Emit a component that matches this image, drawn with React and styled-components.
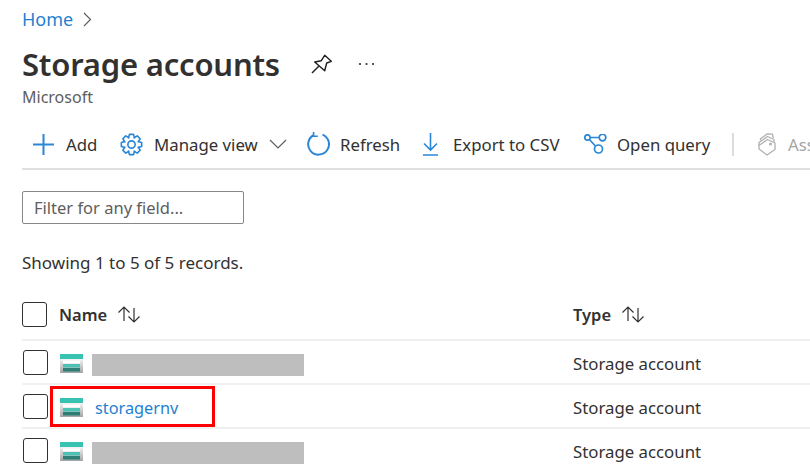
import React from "react";
import styled, { createGlobalStyle } from "styled-components";

const GlobalStyle = createGlobalStyle`
	html, body {
		margin: 0;
		padding: 0;
		background: #fff;
		overflow: hidden;
	}
	body {
		font-family: "Noto Sans", "Open Sans", sans-serif;
		color: #323130;
	}
	svg {
		flex: none;
	}
`;

const Page = styled.div`
	width: 810px;
	height: 471px;
	overflow: hidden;
	padding: 8px 0 0 22px;
	box-sizing: border-box;
`;

const Breadcrumb = styled.div`
	display: flex;
	align-items: center;
	gap: 10px;
	height: 22px;
	font-size: 18px;
	color: #1f7fd1;
`;

const TitleRow = styled.div`
	display: flex;
	align-items: center;
	margin-top: 11px;
	height: 46px;
`;

const Title = styled.h1`
	margin: 0;
	font-size: 31px;
	line-height: 46px;
	font-weight: 600;
	letter-spacing: -0.2px;
	color: #323130;
	white-space: nowrap;
	width: 256px;
`;

const PinButton = styled.span`
	display: flex;
	margin-left: 33px;
`;

const MoreDots = styled.span`
	display: flex;
	margin-left: 26px;
`;

const Subtitle = styled.div`
	font-size: 16px;
	line-height: 20px;
	color: #605e5c;
`;

const Toolbar = styled.div`
	display: flex;
	align-items: center;
	height: 48px;
	margin-top: 15px;
	padding: 0 0 2px 11px;
	border-bottom: 2px solid #e1dfdd;
	box-sizing: border-box;
	white-space: nowrap;
`;

const ToolButton = styled.div`
	display: flex;
	align-items: center;
	flex: none;
	width: ${(p) => p.$width}px;
	gap: ${(p) => p.$gap || 12}px;
	font-size: 16.8px;
	color: ${(p) => (p.$disabled ? "#a6a6a6" : "#323130")};
`;

const Divider = styled.span`
	flex: none;
	width: 2px;
	height: 23px;
	background: #dcdcdc;
	margin-right: 24px;
`;

const FilterInput = styled.div`
	width: 222px;
	height: 33px;
	margin-top: 21px;
	border: 1px solid #8a8886;
	border-radius: 2px;
	box-sizing: border-box;
	padding-left: 11px;
	font-size: 16.5px;
	line-height: 31px;
	color: #605e5c;
`;

const Records = styled.div`
	font-size: 17px;
	line-height: 22px;
	margin-top: 28px;
	color: #323130;
`;

const Table = styled.div`
	position: relative;
	margin-top: 17px;
`;

const Row = styled.div`
	display: grid;
	grid-template-columns: 37px 514px 1fr;
	align-items: center;
	height: ${(p) => (p.$head ? 50 : 44)}px;
	padding-bottom: ${(p) => (p.$head ? 2 : 0)}px;
	border-bottom: 2px solid #f0f0f0;
	box-sizing: border-box;
	font-size: 16.8px;
`;

const Check = styled.span`
	display: block;
	width: 25px;
	height: 25px;
	margin-left: ${(p) => (p.$head ? 0 : 1)}px;
	border: 1px solid #323130;
	border-radius: 3px;
	box-sizing: border-box;
	background: #fff;
`;

const HeadCell = styled.div`
	display: flex;
	align-items: center;
	gap: 10px;
	font-size: 16.5px;
	font-weight: 600;
	color: #323130;
`;

const NameCell = styled.div`
	display: flex;
	align-items: center;
	gap: ${(p) => (p.$link ? 12 : 9)}px;
	padding-left: 1px;
`;

const TypeCell = styled.div`
	padding-top: 3px;
`;

const Redacted = styled.span`
	display: block;
	width: 212px;
	height: 22px;
	margin-top: 6px;
	background: #bebebe;
`;

const NameLink = styled.a`
	color: #1f7fd1;
	font-size: 16.3px;
	padding-top: 3px;
`;

const StorageSvg = styled.svg`
	margin-top: 3px;
`;

const Highlight = styled.div`
	position: absolute;
	left: 28px;
	top: 95px;
	width: 165px;
	height: 41px;
	border: 3px solid #ff0000;
	box-sizing: border-box;
`;

const blue = "#2a86d6";

// 8 tooth cog outline around the centre of a 24 box
function cogPath() {
	const points = [];
	for (let i = 0; i < 8; i++) {
		const a = (i * Math.PI) / 4;
		[
			[-0.42, 7.6],
			[-0.2, 10.8],
			[0.2, 10.8],
			[0.42, 7.6],
		].forEach(([da, r]) => {
			points.push(
				`${(12 + r * Math.cos(a + da)).toFixed(2)} ${(12 + r * Math.sin(a + da)).toFixed(2)}`
			);
		});
	}
	return `M${points.join("L")}z`;
}

const PlusIcon = () => (
	<svg width="21" height="21" viewBox="0 0 21 21" fill="none" stroke={blue} strokeWidth="2">
		<path d="M10.5 0v21M0 10.5h21" />
	</svg>
);

const GearIcon = () => (
	<svg width="23" height="23" viewBox="0 0 24 24" fill="none" stroke={blue} strokeWidth="1.7" strokeLinejoin="round">
		<path d={cogPath()} />
		<circle cx="12" cy="12" r="3.8" />
	</svg>
);

const ChevronDown = () => (
	<svg width="18" height="10" viewBox="0 0 18 10" fill="none" stroke="#605e5c" strokeWidth="1.2">
		<path d="M1 1l8 8 8-8" />
	</svg>
);

const ChevronRight = () => (
	<svg width="9" height="15" viewBox="0 0 9 15" fill="none" stroke="#605e5c" strokeWidth="1.2">
		<path d="M1 1l6.5 6.5L1 14" />
	</svg>
);

const RefreshIcon = () => (
	<svg width="24" height="24" viewBox="0 0 24 24" fill="none" stroke={blue} strokeWidth="2">
		<path d="M15.5 2.6A10.4 10.4 0 1 1 6.8 3" />
		<path d="M6.6 0v4.2h4.2" strokeWidth="1.6" />
	</svg>
);

const DownloadIcon = () => (
	<svg width="15" height="23" viewBox="0 0 15 23" fill="none" stroke={blue} strokeWidth="1.6">
		<path d="M7.5 0v17M1 10.5l6.5 6.5 6.5-6.5M0 22h15" />
	</svg>
);

const QueryIcon = () => (
	<svg width="23" height="20" viewBox="0 0 23 20" fill="none" stroke={blue} strokeWidth="1.7">
		<circle cx="3.5" cy="3.5" r="2.7" />
		<circle cx="18.5" cy="3.5" r="3.3" />
		<circle cx="14.5" cy="15" r="4" />
		<path d="M6.2 3.5h9M5.4 5.5l6 6.5" />
	</svg>
);

const TagsIcon = () => (
	<svg width="18" height="23" viewBox="0 0 18 23" fill="none" stroke="#b0b0b0" strokeWidth="1.3" strokeLinejoin="round">
		<path d="M1 12.5L9.5 6.5 17 10v6.5L9 22 1 16z" />
		<circle cx="12.5" cy="11" r="0.9" />
		<path d="M1 12.5V9.5L9.5 3.5l6.5 3v2.5" />
		<path d="M2.5 7.5V5.8L9 1l5.5.2.8 4" />
	</svg>
);

const PinIcon = () => (
	<svg width="21" height="20" viewBox="0 0 21 20" fill="none" stroke="#201f1e" strokeWidth="1.4" strokeLinejoin="round">
		<path d="M13.7 1.3l6.6 6-4.6 1.7-2 7.7-10-8.7 6.6-1.3z" />
		<path d="M8 12l-7 7" />
	</svg>
);

const DotsIcon = () => (
	<svg width="17" height="4" viewBox="0 0 17 4" fill="#323130">
		<circle cx="2" cy="2" r="1.1" />
		<circle cx="8.5" cy="2" r="1.1" />
		<circle cx="15" cy="2" r="1.1" />
	</svg>
);

const SortIcon = () => (
	<svg width="24" height="17" viewBox="0 0 24 17" fill="none" stroke="#323130" strokeWidth="1.2">
		<path d="M7 15V1M1.5 6.5L7 1l5.5 5.5M17 2v14M11.5 10.5L17 16l5.5-5.5" />
	</svg>
);

const StorageIcon = () => (
	<StorageSvg width="23" height="19" viewBox="0 0 23 19">
		<defs>
			<linearGradient id="storageBody" x1="0" y1="0" x2="0" y2="1">
				<stop offset="0" stopColor="#f4f4f4" />
				<stop offset="1" stopColor="#a4a4a4" />
			</linearGradient>
		</defs>
		<rect x="0" y="5" width="23" height="14" fill="url(#storageBody)" />
		<rect x="0" y="0" width="23" height="5" fill="#37c2b1" />
		<rect x="3" y="6.5" width="17" height="3" fill="#ffffff" />
		<rect x="3" y="10" width="17" height="3.5" fill="#4cc3b5" />
		<rect x="3" y="14" width="17" height="3.5" fill="#2d7f76" />
	</StorageSvg>
);

const SortHead = ({ children }) => (
	<HeadCell>
		{children}
		<SortIcon />
	</HeadCell>
);

const rows = [{ id: 1 }, { id: 2, name: "storagernv" }, { id: 3 }];

export default function App() {
	return (
		<Page>
			<GlobalStyle />
			<Breadcrumb>
				Home
				<ChevronRight />
			</Breadcrumb>
			<TitleRow>
				<Title>Storage accounts</Title>
				<PinButton>
					<PinIcon />
				</PinButton>
				<MoreDots>
					<DotsIcon />
				</MoreDots>
			</TitleRow>
			<Subtitle>Microsoft</Subtitle>
			<Toolbar>
				<ToolButton $width={87} $gap={12}>
					<PlusIcon />
					Add
				</ToolButton>
				<ToolButton $width={187} $gap={11}>
					<GearIcon />
					Manage view
					<ChevronDown />
				</ToolButton>
				<ToolButton $width={116} $gap={9}>
					<RefreshIcon />
					Refresh
				</ToolButton>
				<ToolButton $width={161} $gap={15}>
					<DownloadIcon />
					Export to CSV
				</ToolButton>
				<ToolButton $width={148} $gap={10}>
					<QueryIcon />
					Open query
				</ToolButton>
				<Divider />
				<ToolButton $width={80} $gap={12} $disabled>
					<TagsIcon />
					Assign tags
				</ToolButton>
			</Toolbar>
			<FilterInput>Filter for any field...</FilterInput>
			<Records>Showing 1 to 5 of 5 records.</Records>
			<Table>
				<Row $head>
					<Check $head />
					<SortHead>Name</SortHead>
					<SortHead>Type</SortHead>
				</Row>
				{rows.map((row) => (
					<Row key={row.id}>
						<Check />
						<NameCell $link={Boolean(row.name)}>
							<StorageIcon />
							{row.name ? <NameLink>{row.name}</NameLink> : <Redacted />}
						</NameCell>
						<TypeCell>Storage account</TypeCell>
					</Row>
				))}
				<Highlight />
			</Table>
		</Page>
	);
}
